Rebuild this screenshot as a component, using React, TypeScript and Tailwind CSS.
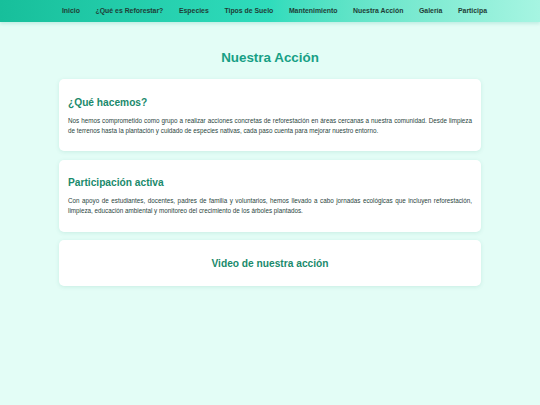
const links = [
  "Inicio",
  "¿Qué es Reforestar?",
  "Especies",
  "Tipos de Suelo",
  "Mantenimiento",
  "Nuestra Acción",
  "Galería",
  "Participa",
];

function Card({ title, children, center }: { title: string; children?: React.ReactNode; center?: boolean }) {
  return (
    <section className="bg-white rounded-[5px] shadow-[0_1px_4px_rgba(0,120,100,0.12)] px-[9px] pt-[17.5px] pb-[16px]">
      <h3
        className={`text-[10.2px] leading-[12px] font-bold text-[#1a8a6c] ${center ? "text-center" : ""}`}
      >
        {title}
      </h3>
      {children && (
        <p className="mt-[7px] -mb-[0.5px] text-[6.3px] leading-[10px] text-[#2a4540] text-justify">{children}</p>
      )}
    </section>
  );
}

export default function App() {
  return (
    <div className="min-h-[405px] bg-[#e3fdf6] font-['Liberation_Sans',Arial,sans-serif]">
      <nav className="h-[22px] bg-gradient-to-r from-[#17bf9b] via-[#2fdcbc] to-[#a6f5e2] shadow-[0_2px_3px_rgba(0,150,120,0.15)] flex items-center justify-center gap-[15.6px] pl-[9px] pt-[1px]">
        {links.map((l) => (
          <a key={l} className="text-[6.9px] font-bold text-[#1f3d36]">
            {l}
          </a>
        ))}
      </nav>

      <main className="w-[422px] mx-auto pt-[28px]">
        <h2 className="text-center text-[13.4px] leading-[16px] font-bold text-[#16a085] mb-[13px]">
          Nuestra Acción
        </h2>
        <div className="flex flex-col gap-[8.5px]">
          <Card title="¿Qué hacemos?">
            Nos hemos comprometido como grupo a realizar acciones concretas de reforestación en áreas cercanas a
            nuestra comunidad. Desde limpieza de terrenos hasta la plantación y cuidado de especies nativas, cada paso
            cuenta para mejorar nuestro entorno.
          </Card>
          <Card title="Participación activa">
            Con apoyo de estudiantes, docentes, padres de familia y voluntarios, hemos llevado a cabo jornadas
            ecológicas que incluyen reforestación, limpieza, educación ambiental y monitoreo del crecimiento de los
            árboles plantados.
          </Card>
          <Card title="Video de nuestra acción" center />
        </div>
      </main>
    </div>
  );
}
